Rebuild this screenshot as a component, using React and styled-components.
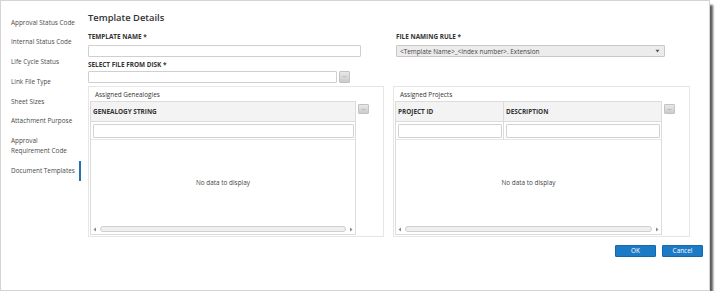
import styled, { createGlobalStyle } from 'styled-components'

const GlobalStyle = createGlobalStyle`
    html, body { margin:0; padding:0; background:#ffffff; }
    body { font-family:"Open Sans", "Noto Sans", sans-serif; font-size:6.4px; color:#333333; }
    * { box-sizing:border-box; }
`

const Window = styled.div`
    display:flex;
    width:710px;
    height:291px;
    border:1px solid #d4d4d4;
    background:#ffffff;
    box-shadow:4px 4px 2px -1px rgba(40,40,40,0.75);
`

const Sidebar = styled.nav`
    width:80px;
    padding-top:11.5px;
    display:flex;
    flex-direction:column;
`

const NavItem = styled.div`
    padding:5px 4px 5px 10px;
    line-height:9.8px;
    color:#4a4a4a;
    border-right:2.5px solid ${props => props.$active ? '#1f74b5' : 'transparent'};
`

const Main = styled.main`
    flex:1;
    padding:11px 6px 0 7px;
    display:flex;
    flex-direction:column;
`

const Heading = styled.h1`
    margin:0;
    font-size:9.4px;
    font-weight:600;
    line-height:12px;
    color:#333333;
`

const Form = styled.div`
    display:grid;
    grid-template-columns:273px 269px;
    column-gap:35px;
    margin-top:9px;
`

const Field = styled.div`
    display:flex;
    flex-direction:column;
`

const Label = styled.label`
    font-weight:700;
    line-height:8px;
    color:#333333;
    margin:${props => props.$spaced ? '4px 0 2px' : '0 0 4px'};
`

const TextInput = styled.div`
    height:12px;
    border:1px solid #cfcfcf;
    border-radius:1px;
    background:#ffffff;
`

const FileRow = styled.div`
    display:flex;
    gap:2px;
    width:262px;
`

const FileInput = styled(TextInput)`
    flex:1;
`

const DotsButton = styled.div`
    width:11px;
    height:${props => props.$tall ? '12px' : '10px'};
    margin-top:${props => props.$offset || 0}px;
    border:1px solid #c2c2c2;
    border-radius:1px;
    background:linear-gradient(#e8e8e8, #cbcbcb);
    color:#666666;
    font-size:5px;
    line-height:7px;
    text-align:center;
    flex-shrink:0;
`

const Select = styled.div`
    height:12px;
    border:1px solid #c8c8c8;
    border-radius:1px;
    background:#ececec;
    display:flex;
    align-items:center;
    justify-content:space-between;
    padding:0 4px 0 3px;
    color:#444444;
`

const Panels = styled.div`
    display:flex;
    gap:9px;
    margin-top:3px;
`

const Panel = styled.section`
    width:${props => props.$width}px;
    height:151px;
    border:1px solid #e6e6e6;
    padding:3.5px 1px 0 1px;
`

const PanelTitle = styled.div`
    line-height:8px;
    padding-left:5px;
    color:#333333;
    margin-bottom:2px;
`

const GridRow = styled.div`
    display:flex;
    gap:2px;
    align-items:flex-start;
`

const Grid = styled.div`
    width:${props => props.$width}px;
    border:1px solid #dcdcdc;
    display:flex;
    flex-direction:column;
`

const Columns = styled.div`
    display:grid;
    grid-template-columns:${props => props.$cols};
`

const HeaderCell = styled.div`
    height:20px;
    line-height:19px;
    padding-left:2px;
    font-weight:700;
    color:#333333;
    background:#f3f3f3;
    border-bottom:1px solid #dcdcdc;
    border-left:${props => props.$first ? 'none' : '1px solid #dcdcdc'};
`

const FilterCell = styled.div`
    height:18px;
    padding:2px 1.5px;
    border-bottom:1px solid #e6e6e6;
    border-left:${props => props.$first ? 'none' : '1px solid #dcdcdc'};
`

const FilterInput = styled.div`
    height:14px;
    border:1px solid #d2d2d2;
    border-radius:1px;
`

const Body = styled.div`
    height:85px;
    display:flex;
    align-items:center;
    justify-content:center;
    color:#444444;
`

const ScrollBar = styled.div`
    height:9px;
    display:flex;
    align-items:center;
    gap:3px;
    padding:0 2px;
`

const Track = styled.div`
    flex:1;
    height:6px;
    border:1px solid #cfcfcf;
    border-radius:3px;
    background:#efefef;
`

const Footer = styled.div`
    display:flex;
    justify-content:flex-end;
    gap:6px;
    margin-top:8px;
`

const Button = styled.button`
    width:41px;
    height:12px;
    padding:0;
    border:1px solid #1569ab;
    border-radius:1px;
    background:#1d7bc6;
    color:#ffffff;
    font-family:inherit;
    font-size:6.4px;
    line-height:10px;
`

const navItems = [
    'Approval Status Code',
    'Internal Status Code',
    'Life Cycle Status',
    'Link File Type',
    'Sheet Sizes',
    'Attachment Purpose',
    ['Approval', 'Requirement Code'],
    'Document Templates',
]

function Arrow({ dir }){
    return(
        <svg width="4" height="5" viewBox="0 0 4 5">
            {dir === 'left' ? <path d="M3 0.5 L0.5 2.5 L3 4.5 Z" fill="#888" /> : <path d="M1 0.5 L3.5 2.5 L1 4.5 Z" fill="#888" />}
        </svg>
    )
}

function DataGrid({ width, cols, columns }){
    return(
        <Grid $width={width}>
            <Columns $cols={cols}>
                {columns.map((col, index) => <HeaderCell key={col} $first={index === 0}>{col}</HeaderCell>)}
                {columns.map((col, index) => <FilterCell key={col} $first={index === 0}><FilterInput /></FilterCell>)}
            </Columns>
            <Body>No data to display</Body>
            <ScrollBar>
                <Arrow dir="left" />
                <Track />
                <Arrow dir="right" />
            </ScrollBar>
        </Grid>
    )
}

function App(){
    return(
        <>
            <GlobalStyle />
            <Window>
                <Sidebar>
                    {navItems.map((item, index) => (
                        <NavItem key={index} $active={index === navItems.length - 1}>
                            {Array.isArray(item) ? item.map(line => <div key={line}>{line}</div>) : item}
                        </NavItem>
                    ))}
                </Sidebar>
                <Main>
                    <Heading>Template Details</Heading>
                    <Form>
                        <Field>
                            <Label>TEMPLATE NAME *</Label>
                            <TextInput />
                            <Label $spaced>SELECT FILE FROM DISK *</Label>
                            <FileRow>
                                <FileInput />
                                <DotsButton $tall>...</DotsButton>
                            </FileRow>
                        </Field>
                        <Field>
                            <Label>FILE NAMING RULE *</Label>
                            <Select>
                                <span>&lt;Template Name&gt;_&lt;Index number&gt;. Extension</span>
                                <svg width="5" height="4" viewBox="0 0 5 4"><path d="M0.5 0.8 L4.5 0.8 L2.5 3.4 Z" fill="#555" /></svg>
                            </Select>
                        </Field>
                    </Form>
                    <Panels>
                        <Panel $width={296}>
                            <PanelTitle>Assigned Genealogies</PanelTitle>
                            <GridRow>
                                <DataGrid width={266} cols="1fr" columns={['GENEALOGY STRING']} />
                                <DotsButton $offset={3}>...</DotsButton>
                            </GridRow>
                        </Panel>
                        <Panel $width={297}>
                            <PanelTitle>Assigned Projects</PanelTitle>
                            <GridRow>
                                <DataGrid width={267} cols="107px 1fr" columns={['PROJECT ID', 'DESCRIPTION']} />
                                <DotsButton $offset={3}>...</DotsButton>
                            </GridRow>
                        </Panel>
                    </Panels>
                    <Footer>
                        <Button>OK</Button>
                        <Button>Cancel</Button>
                    </Footer>
                </Main>
            </Window>
        </>
    )
}

export default App
